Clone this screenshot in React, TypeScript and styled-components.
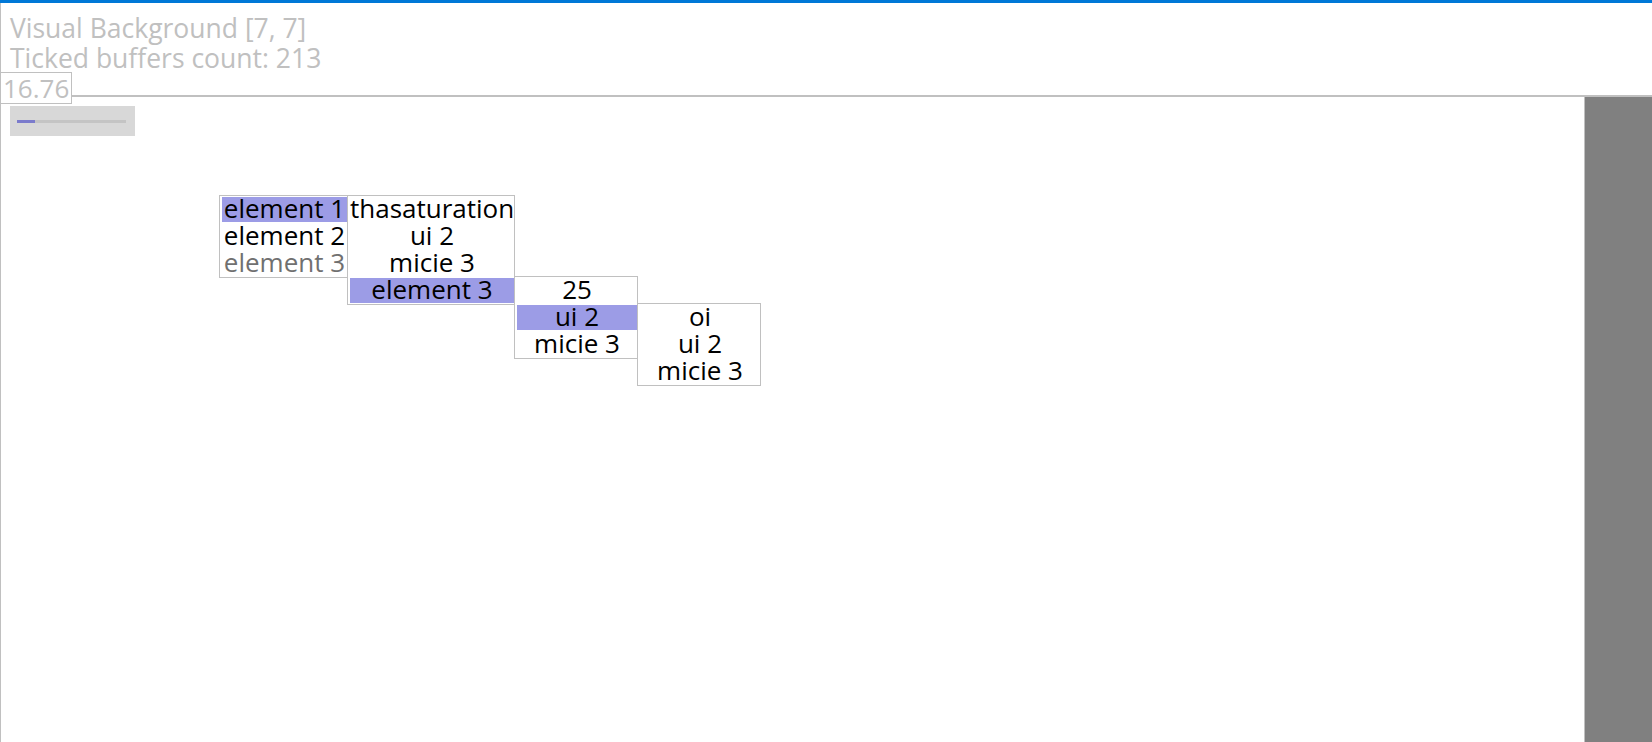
import React from 'react';
import styled, { createGlobalStyle } from 'styled-components';

type MenuEntry = {
    label: string;
    active?: boolean;
    disabled?: boolean;
    submenu?: MenuData;
};

type MenuData = {
    width: number;
    items: MenuEntry[];
};

const ITEM_SLOT = 27;

const menuTree: MenuData = {
    width: 129,
    items: [
        {
            label: 'element 1',
            active: true,
            submenu: {
                width: 168,
                items: [
                    { label: 'thasaturation' },
                    { label: 'ui 2' },
                    { label: 'micie 3' },
                    {
                        label: 'element 3',
                        active: true,
                        submenu: {
                            width: 124,
                            items: [
                                { label: '25' },
                                {
                                    label: 'ui 2',
                                    active: true,
                                    submenu: {
                                        width: 124,
                                        items: [{ label: 'oi' }, { label: 'ui 2' }, { label: 'micie 3' }],
                                    },
                                },
                                { label: 'micie 3' },
                            ],
                        },
                    },
                ],
            },
        },
        { label: 'element 2' },
        { label: 'element 3', disabled: true },
    ],
};

const GlobalStyle = createGlobalStyle`
    html, body {
        margin: 0;
        padding: 0;
        background: #fff;
    }

    body {
        font-family: 'Open Sans', 'Noto Sans', sans-serif;
        overflow: hidden;
    }
`;

const Shell = styled.div`
    display: flex;
    flex-direction: column;
    height: 100vh;
    border-top: 3px solid #0078d7;
    box-sizing: border-box;
`;

const Frame = styled.div`
    flex: 1;
    display: flex;
    flex-direction: column;
    min-height: 0;
    border-left: 1px solid #c0c0c0;
`;

const Header = styled.header`
    height: 92px;
    box-sizing: border-box;
    padding-top: 11px;
    display: flex;
    flex-direction: column;
    align-items: flex-start;
`;

const InfoLine = styled.div`
    padding-left: 9px;
    font-size: 26.5px;
    line-height: 29.5px;
    color: #c0c0c0;
    white-space: nowrap;
`;

const FpsBox = styled.div`
    position: relative;
    z-index: 1;
    margin: -1px 0 0 -1px;
    padding: 0 2px;
    border: 1px solid #c0c0c0;
    background: #fff;
    font-size: 26px;
    line-height: 30px;
    color: #c0c0c0;
`;

const Workspace = styled.main`
    flex: 1;
    display: flex;
    min-height: 0;
    border-top: 2px solid #c0c0c0;
`;

const Canvas = styled.section`
    flex: 1;
    padding: 9px;
    display: flex;
    flex-direction: column;
    align-items: flex-start;
`;

const Sidebar = styled.aside`
    width: 67px;
    background: #808080;
    border-left: 1px solid #c0c0c0;
`;

const SliderBox = styled.div`
    width: 125px;
    height: 30px;
    box-sizing: border-box;
    padding: 0 9px 0 7px;
    background: #d8d8d8;
    display: flex;
    align-items: center;
`;

const SliderTrack = styled.div`
    flex: 1;
    height: 3px;
    background: #c4c4c4;
    display: flex;
`;

const SliderFill = styled.div`
    height: 100%;
    background: #7b7bcc;
`;

const MenuAnchor = styled.div`
    margin: 59px 0 0 209px;
`;

const MenuBox = styled.div<{ $width: number }>`
    position: relative;
    width: ${(p) => p.$width}px;
    box-sizing: border-box;
    padding-left: 2px;
    border: 1px solid #c0c0c0;
    background: #fff;
    display: flex;
    flex-direction: column;
`;

const SubmenuSlot = styled.div<{ $index: number }>`
    position: absolute;
    left: 100%;
    top: ${(p) => p.$index * ITEM_SLOT - 1}px;
`;

const Item = styled.div<{ $active?: boolean; $disabled?: boolean }>`
    height: 25px;
    margin: 1px 0;
    font-size: 26px;
    line-height: 23px;
    text-align: center;
    white-space: nowrap;
    color: ${(p) => (p.$disabled ? '#707070' : '#000')};
    background: ${(p) => (p.$active ? '#9c9ce6' : 'transparent')};
`;

const Menu: React.FC<{ data: MenuData }> = ({ data }) => {
    const openIndex = data.items.findIndex((item) => item.submenu);
    const open = openIndex >= 0 ? data.items[openIndex].submenu : undefined;

    return (
        <MenuBox $width={data.width}>
            {data.items.map((item, i) => (
                <Item key={i} $active={item.active} $disabled={item.disabled}>
                    {item.label}
                </Item>
            ))}
            {open && (
                <SubmenuSlot $index={openIndex}>
                    <Menu data={open} />
                </SubmenuSlot>
            )}
        </MenuBox>
    );
};

const App: React.FC = () => {
    const sliderValue = 0.165;

    return (
        <>
            <GlobalStyle />
            <Shell>
                <Frame>
                    <Header>
                        <InfoLine>Visual Background [7, 7]</InfoLine>
                        <InfoLine>Ticked buffers count: 213</InfoLine>
                        <FpsBox>16.76</FpsBox>
                    </Header>
                    <Workspace>
                        <Canvas>
                            <SliderBox>
                                <SliderTrack>
                                    <SliderFill style={{ width: `${sliderValue * 100}%` }} />
                                </SliderTrack>
                            </SliderBox>
                            <MenuAnchor>
                                <Menu data={menuTree} />
                            </MenuAnchor>
                        </Canvas>
                        <Sidebar />
                    </Workspace>
                </Frame>
            </Shell>
        </>
    );
};

export default App;
